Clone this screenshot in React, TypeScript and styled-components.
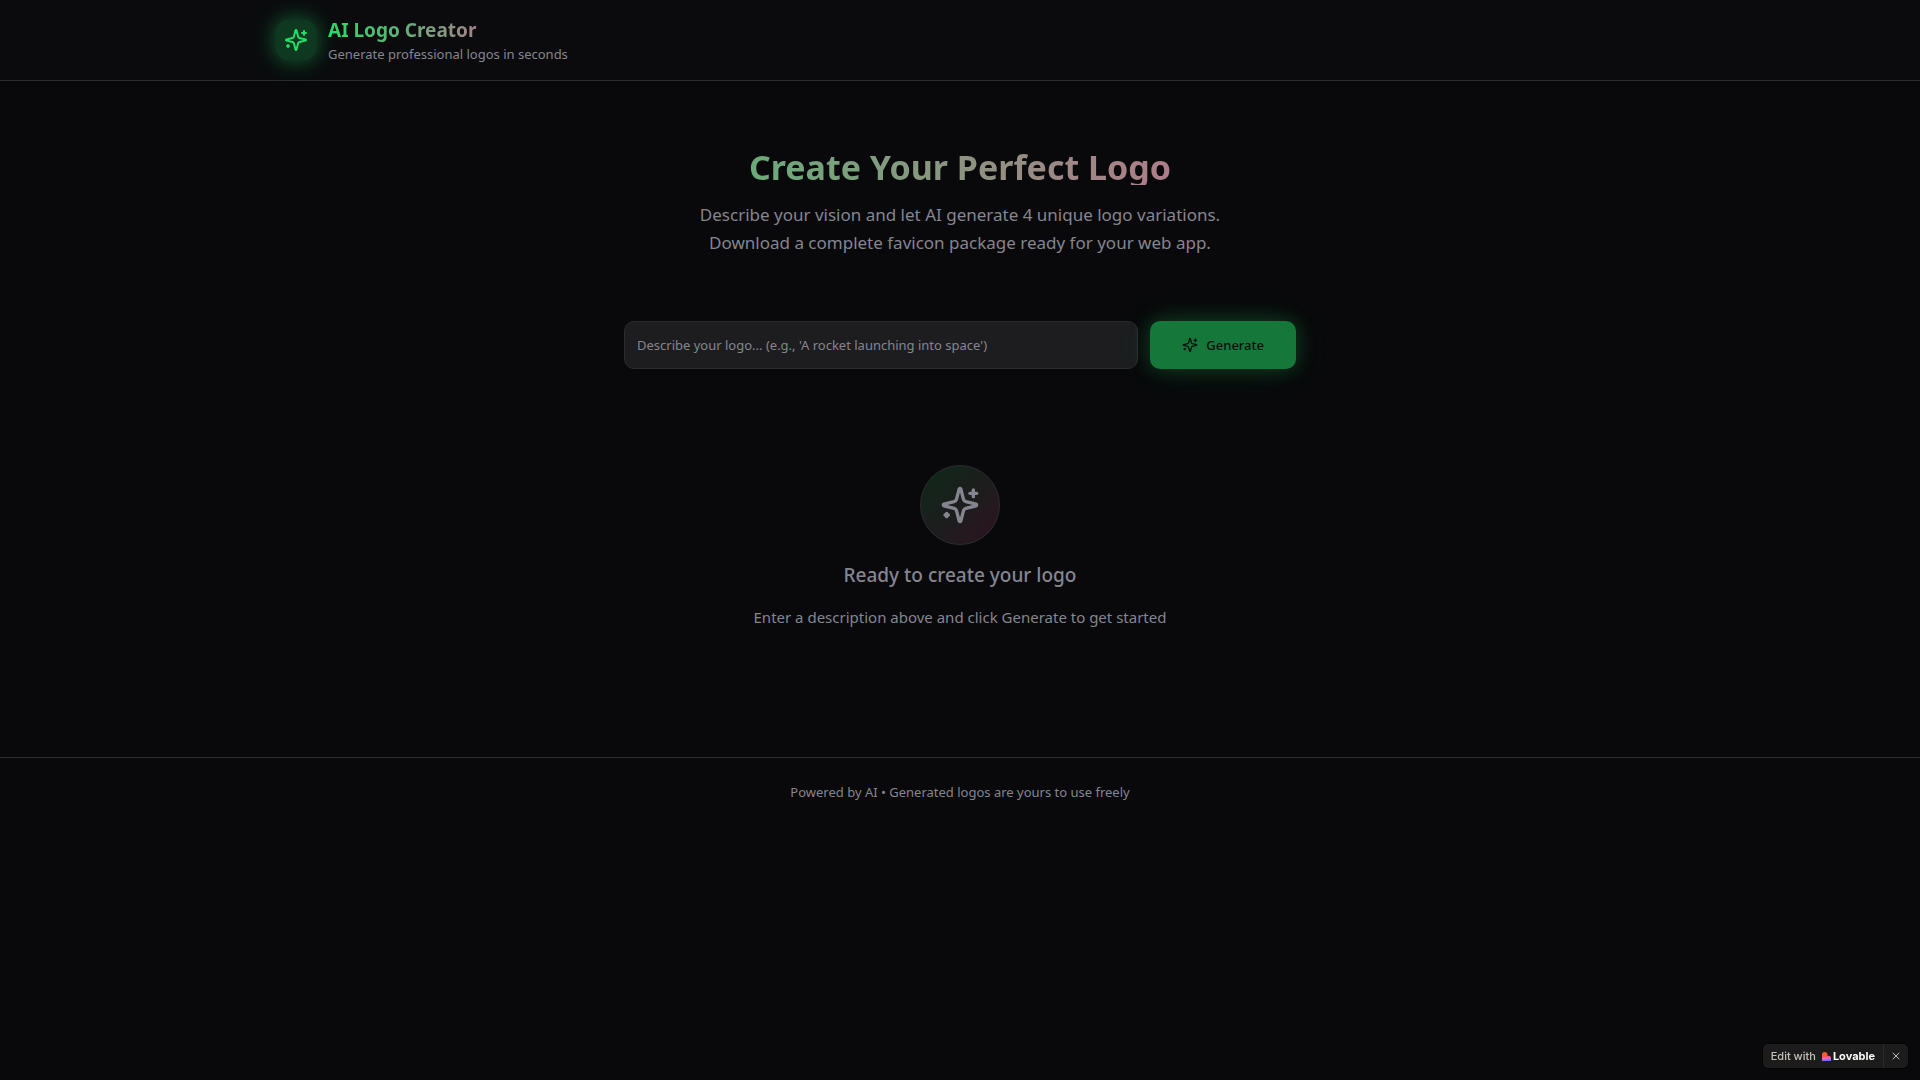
import React, { useState } from "react";
import styled, { createGlobalStyle } from "styled-components";
import { X } from "lucide-react";

const GlobalStyle = createGlobalStyle`
  *, *::before, *::after { box-sizing: border-box; }
  body {
    margin: 0;
    background: #09090b;
    color: #fafafa;
    font-family: "Noto Sans", "Open Sans", sans-serif;
    font-size: 15px;
    line-height: 24px;
  }
  h1, h2, h3, p { margin: 0; }
  button, input { font: inherit; }
`;

const green = "#21dd67";
const pink = "#f74a9c";
const muted = "#85858f";
const border = "#2c2c30";

const Header = styled.header`
  background: #0b0b0e;
  border-bottom: 1px solid ${border};
`;

const Container = styled.div`
  max-width: 1400px;
  margin: 0 auto;
  padding: 0 16px;
`;

const Brand = styled(Container)`
  display: flex;
  align-items: center;
  gap: 12px;
  padding: 16px;
`;

const BrandIcon = styled.div`
  display: flex;
  padding: 8px;
  border-radius: 12px;
  background: #0f3820;
  color: ${green};
  box-shadow: 0 0 20px rgba(33, 221, 103, 0.4), 0 0 40px rgba(33, 221, 103, 0.1);
`;

const GradientText = styled.h1`
  background: linear-gradient(90deg, ${green}, ${pink});
  -webkit-background-clip: text;
  background-clip: text;
  color: transparent;
  font-weight: 700;
`;

const BrandName = styled(GradientText)`
  font-size: 19px;
  line-height: 28px;
`;

const Small = styled.p`
  color: ${muted};
  font-size: 13px;
  line-height: 20px;
`;

const Main = styled(Container).attrs({ as: "main" })`
  padding: 64px 16px;
`;

const Hero = styled.section`
  display: flex;
  flex-direction: column;
  gap: 16px;
  margin-bottom: 64px;
  text-align: center;
`;

const HeroTitle = styled(GradientText)`
  height: 40px;
  font-size: 34px;
  line-height: 44px;
`;

const HeroText = styled.p`
  max-width: 576px;
  margin: 0 auto;
  color: ${muted};
  font-size: 17px;
  line-height: 28px;
`;

const PromptForm = styled.form`
  display: flex;
  gap: 12px;
  max-width: 672px;
  margin: 0 auto;
`;

const PromptInput = styled.input`
  flex: 1;
  min-width: 0;
  height: 48px;
  padding: 0 12px;
  border: 1px solid ${border};
  border-radius: 10px;
  outline: none;
  background: #1d1d1f;
  color: #fafafa;
  font-size: 13px;
  &::placeholder { color: ${muted}; opacity: 1; }
`;

const GenerateButton = styled.button`
  display: inline-flex;
  align-items: center;
  justify-content: center;
  gap: 8px;
  height: 48px;
  padding: 0 32px;
  border: 0;
  border-radius: 10px;
  background: #157739;
  color: #09100c;
  font-size: 13px;
  font-weight: 500;
  box-shadow: 0 0 20px rgba(33, 221, 103, 0.25), 0 0 40px rgba(33, 221, 103, 0.08);
`;

const EmptyState = styled.section`
  display: flex;
  flex-direction: column;
  align-items: center;
  gap: 16px;
  padding: 96px 0 64px;
  color: ${muted};
  text-align: center;
`;

const EmptyIcon = styled.div`
  display: grid;
  place-items: center;
  width: 80px;
  height: 80px;
  border: 1px solid ${border};
  border-radius: 50%;
  background: linear-gradient(135deg, rgba(33, 221, 103, 0.15), rgba(247, 74, 156, 0.15));
`;

const EmptyTitle = styled.h3`
  font-size: 19px;
  font-weight: 500;
  line-height: 28px;
`;

const Footer = styled.footer`
  padding: 24px 16px;
  border-top: 1px solid ${border};
  text-align: center;
`;

const Badge = styled.aside`
  position: fixed;
  right: 12px;
  bottom: 12px;
  display: flex;
  height: 24px;
  border-radius: 5px;
  background: #1c1c1c;
  box-shadow: 0 0 0 1px #050505;
  font-family: Inter, sans-serif;
  font-size: 11px;
  line-height: 24px;
`;

const BadgeLink = styled.a`
  display: flex;
  align-items: center;
  gap: 6px;
  padding: 0 8px;
  color: #c5c1ba;
  font-weight: 500;
  text-decoration: none;
`;

const Wordmark = styled.span`
  display: flex;
  align-items: center;
  gap: 2px;
  color: #fcfbf8;
  font-weight: 700;
`;

const BadgeClose = styled.button`
  display: grid;
  place-items: center;
  width: 25px;
  padding: 0;
  border: 0;
  border-left: 1px solid #2b2b2b;
  background: transparent;
  color: #c5c1ba;
`;

const Sparkles = ({ size }: { size: number }) => (
  <svg
    width={size}
    height={size}
    viewBox="0 0 24 24"
    fill="none"
    stroke="currentColor"
    strokeWidth="2"
    strokeLinecap="round"
    strokeLinejoin="round"
    aria-hidden="true"
  >
    <path d="M9.937 15.5A2 2 0 0 0 8.5 14.063l-6.135-1.582a.5.5 0 0 1 0-.962L8.5 9.936A2 2 0 0 0 9.937 8.5l1.582-6.135a.5.5 0 0 1 .963 0L14.063 8.5A2 2 0 0 0 15.5 9.937l6.135 1.581a.5.5 0 0 1 0 .964L15.5 14.063a2 2 0 0 0-1.437 1.437l-1.582 6.135a.5.5 0 0 1-.963 0z" />
    <path d="M20 3v4" />
    <path d="M22 5h-4" />
    <path d="M4 17v2" />
    <path d="M5 18H3" />
  </svg>
);

const LovableMark = () => (
  <svg width="9" height="9" viewBox="0 0 9 9" aria-hidden="true">
    <defs>
      <linearGradient id="lovable" x1="0.4" y1="0" x2="0.5" y2="1">
        <stop offset="0.2" stopColor="#ff5a1f" />
        <stop offset="0.5" stopColor="#ff5068" />
        <stop offset="0.7" stopColor="#e868c8" />
        <stop offset="1" stopColor="#5a6cff" />
      </linearGradient>
    </defs>
    <path d="M0 2.7a2.7 2.7 0 0 1 5.4 0v1h.9a2.65 2.65 0 0 1 2.7 2.65V9H0z" fill="url(#lovable)" />
  </svg>
);

export default function App() {
  const [prompt, setPrompt] = useState("");
  const [badgeOpen, setBadgeOpen] = useState(true);

  return (
    <>
      <GlobalStyle />
      <Header>
        <Brand>
          <BrandIcon>
            <Sparkles size={24} />
          </BrandIcon>
          <div>
            <BrandName>AI Logo Creator</BrandName>
            <Small>Generate professional logos in seconds</Small>
          </div>
        </Brand>
      </Header>
      <Main>
        <Hero>
          <HeroTitle as="h2">Create Your Perfect Logo</HeroTitle>
          <HeroText>
            Describe your vision and let AI generate 4 unique logo variations. Download a complete
            favicon package ready for your web app.
          </HeroText>
        </Hero>
        <PromptForm onSubmit={(event) => event.preventDefault()}>
          <PromptInput
            aria-label="Logo description"
            placeholder="Describe your logo... (e.g., 'A rocket launching into space')"
            value={prompt}
            onChange={(event) => setPrompt(event.target.value)}
          />
          <GenerateButton type="submit">
            <Sparkles size={16} />
            Generate
          </GenerateButton>
        </PromptForm>
        <EmptyState>
          <EmptyIcon>
            <Sparkles size={40} />
          </EmptyIcon>
          <EmptyTitle>Ready to create your logo</EmptyTitle>
          <p>Enter a description above and click Generate to get started</p>
        </EmptyState>
      </Main>
      <Footer>
        <Small>Powered by AI • Generated logos are yours to use freely</Small>
      </Footer>
      {badgeOpen && (
        <Badge>
          <BadgeLink href="#lovable">
            Edit with
            <Wordmark>
              <LovableMark />
              Lovable
            </Wordmark>
          </BadgeLink>
          <BadgeClose type="button" aria-label="Close" onClick={() => setBadgeOpen(false)}>
            <X size={12} />
          </BadgeClose>
        </Badge>
      )}
    </>
  );
}
